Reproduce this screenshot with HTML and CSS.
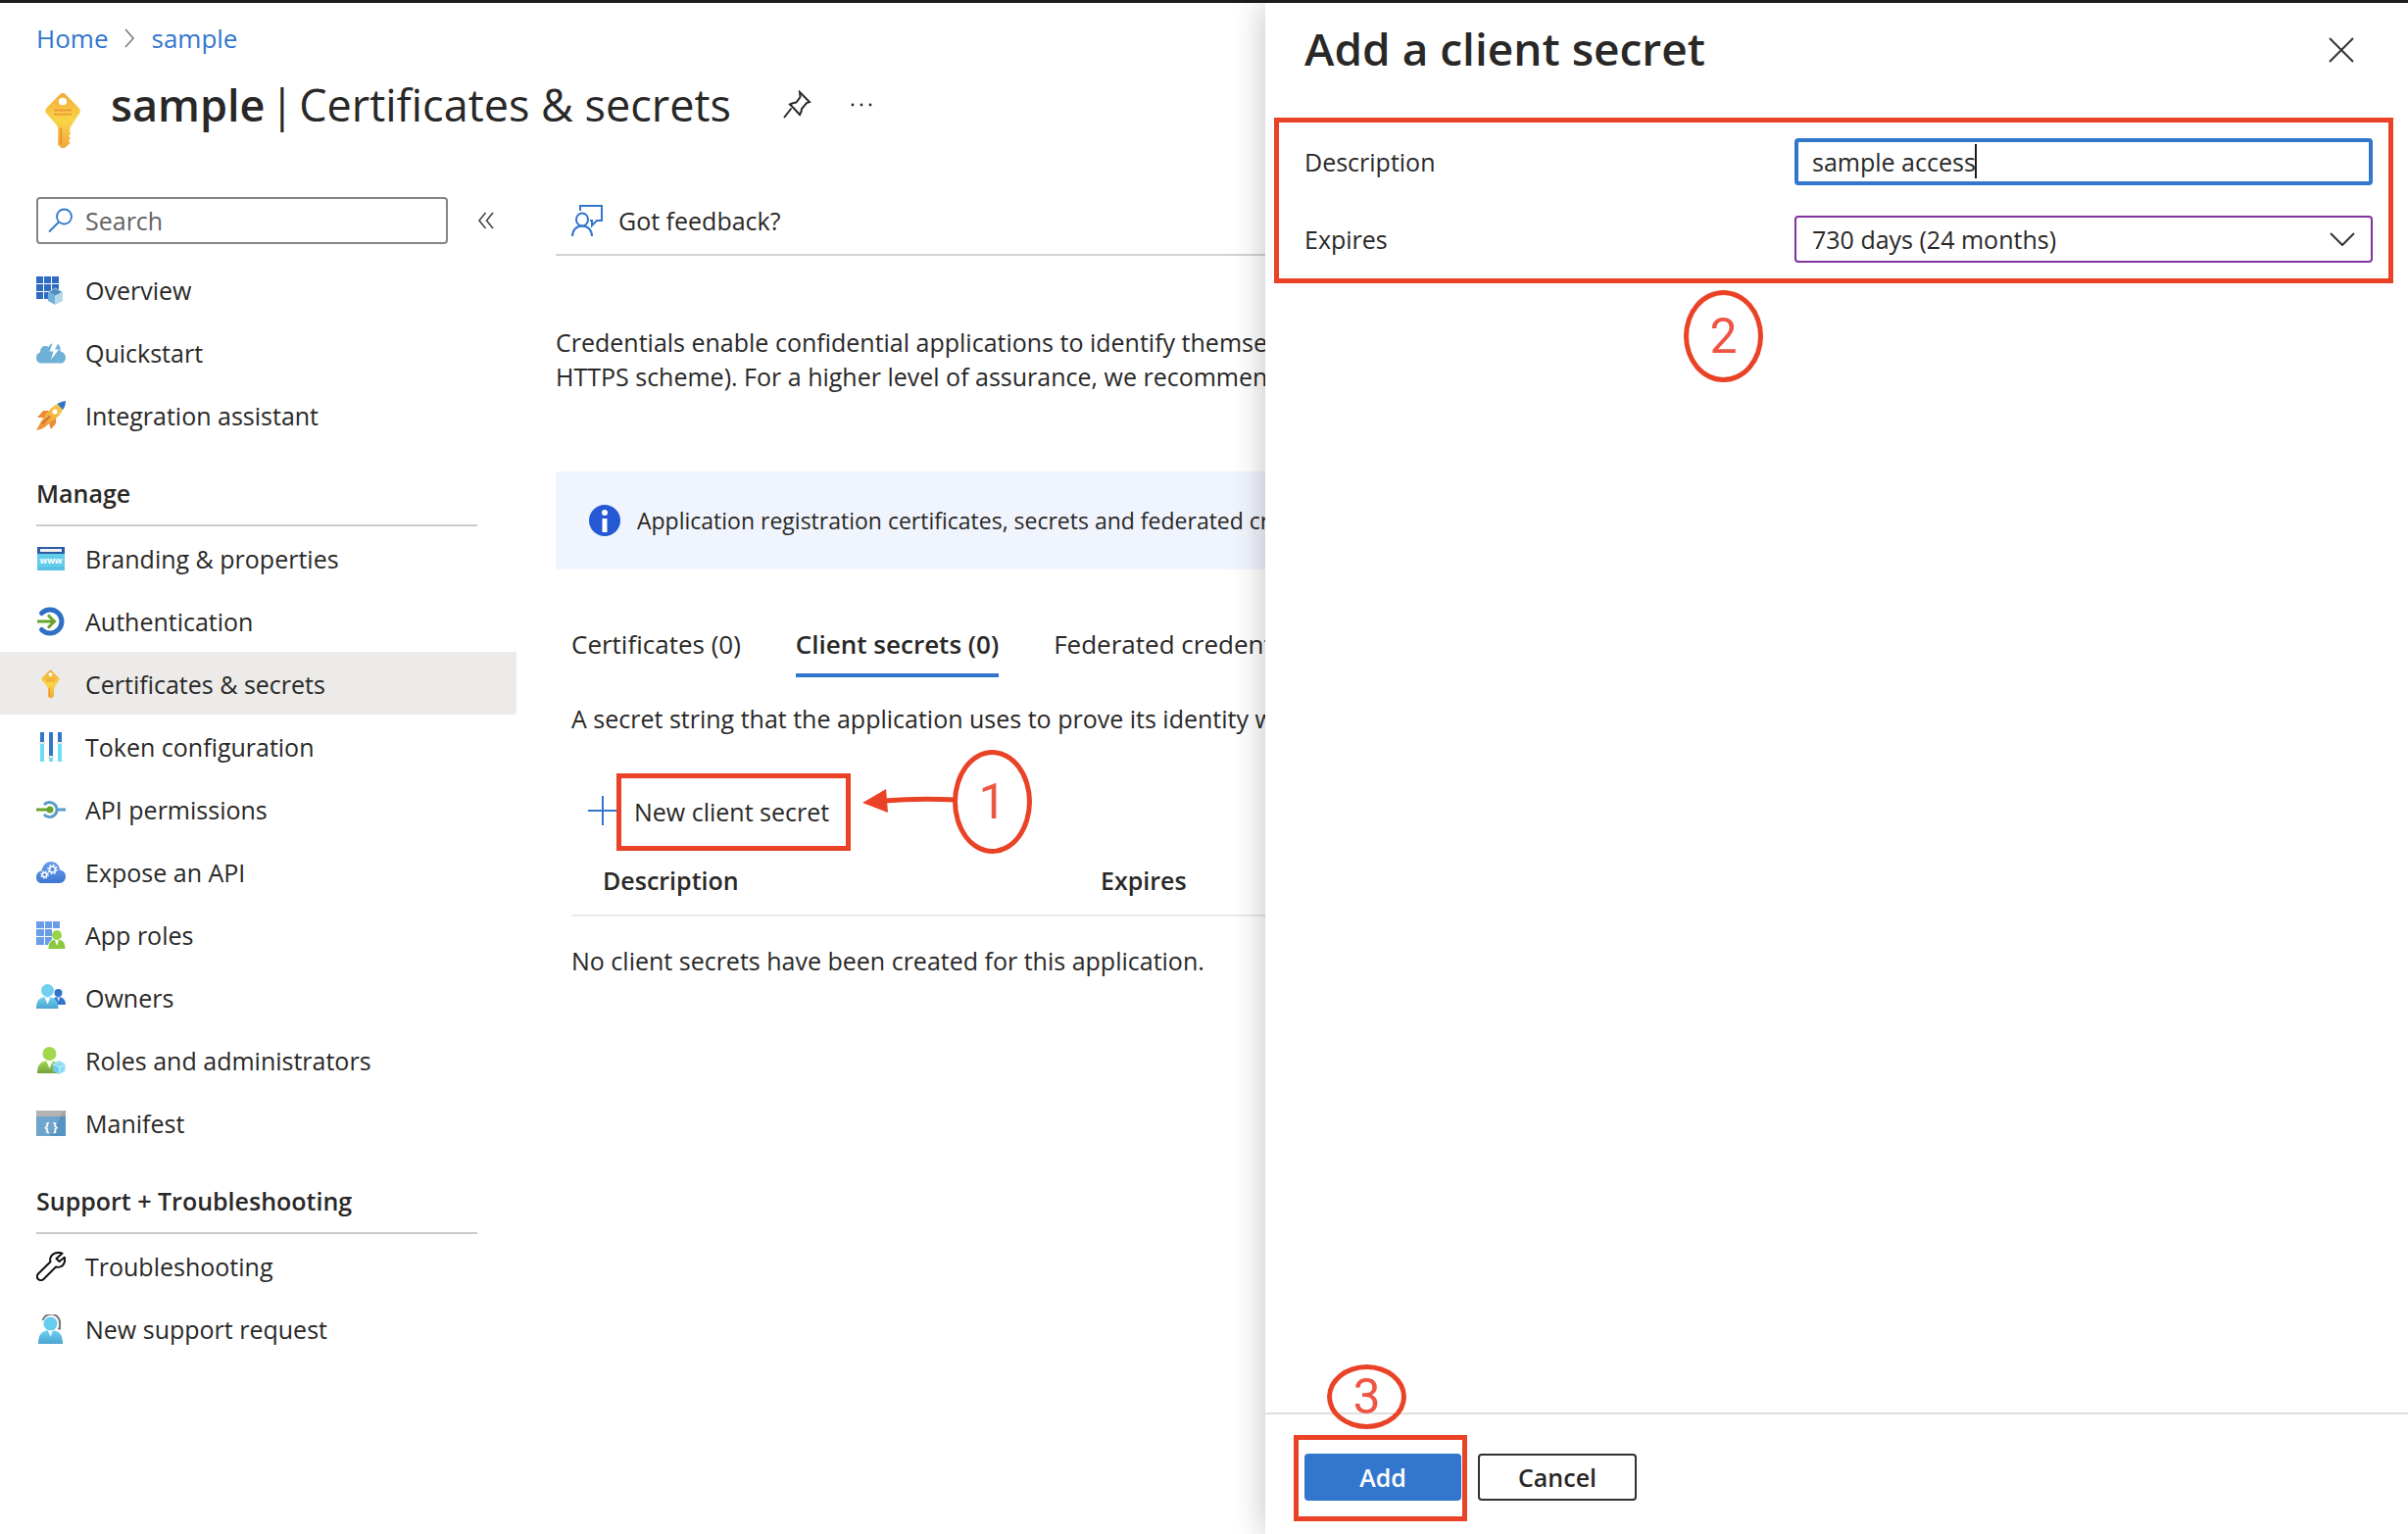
FILE: index.html
```html
<!DOCTYPE html>
<html lang="en">
  <head>
    <meta charset="UTF-8" />
    <title>sample | Certificates &amp; secrets</title>
    <link rel="stylesheet" href="styles.css">
  </head>
  <body>
    <!-- shared gradients -->
    <svg class="defs" width="0" height="0" aria-hidden="true">
      <defs>
        <linearGradient id="gGold" x1="0" y1="0" x2="0" y2="1">
          <stop offset="0" stop-color="#f2ab3c" />
          <stop offset="0.5" stop-color="#f8d547" />
          <stop offset="1" stop-color="#f1a63b" />
        </linearGradient>
        <linearGradient id="gRocket" x1="1" y1="0" x2="0" y2="1">
          <stop offset="0" stop-color="#f7d548" />
          <stop offset="1" stop-color="#ee8a33" />
        </linearGradient>
        <linearGradient id="gSky" x1="0" y1="0" x2="0" y2="1">
          <stop offset="0" stop-color="#6fd3f3" />
          <stop offset="1" stop-color="#4aa3cf" />
        </linearGradient>
        <linearGradient id="gBlue" x1="0" y1="0" x2="0" y2="1">
          <stop offset="0" stop-color="#6a9cec" />
          <stop offset="1" stop-color="#3b79d2" />
        </linearGradient>
        <linearGradient id="gGreen" x1="0" y1="0" x2="0" y2="1">
          <stop offset="0" stop-color="#a9da53" />
          <stop offset="1" stop-color="#71a03a" />
        </linearGradient>
        <symbol id="key" viewBox="0 0 20 30">
          <path fill="url(#gGold)" d="M8.6.5a2 2 0 0 1 2.8 0l7.4 7.6c.9.9.9 2 .3 3l-4.2 6.4c-.6.9-1 1.6-1 2.6l-.1 1 .6 1-1.2 1.3 1 1.2-1 1.3.9 1.4-1.1 1L11 30H9.300l-1.900-1.800V19.800c0-1-.3-1.600-.9-2.500L1 11c-.7-1-.6-2.100.2-3z" />
          <ellipse cx="10" cy="4.600" rx="2.200" ry="2" fill="#fff" />
          <path stroke="#ef9a36" stroke-width="1" d="M5.200 9.400h9.600M5.200 11.600h9.600" />
          <path stroke="#ea9136" stroke-width="1" d="M9 19v9" />
        </symbol>
      </defs>
    </svg>

    <div class="page">
      <header class="page-header">
        <nav class="breadcrumb" aria-label="Breadcrumb">
          <a href="#">Home</a>
          <svg width="12" height="20" viewBox="0 0 12 20"><path d="M2 1l8 9-8 9" fill="none" stroke="#777" stroke-width="1.500" /></svg>
          <a href="#">sample</a>
        </nav>
        <div class="title-row">
          <svg class="title-icon" width="54" height="56"><use href="#key" /></svg>
          <h1><strong>sample</strong> <span>|</span> <span>Certificates &amp; secrets</span></h1>
          <button class="icon-btn pin" aria-label="Pin">
            <svg width="30" height="30" viewBox="0 0 30 30"><path d="M18 2l10 10-3 1-5 6c0 3-1 4-2 6l-5.500-6-4.500-4.500c2-1 4-2 6.500-2l4-5.500zM9.500 18.500L2 28" fill="none" stroke="#292827" stroke-width="2" /></svg>
          </button>
          <button class="icon-btn more" aria-label="More">
            <svg width="24" height="6" viewBox="0 0 24 6"><g fill="#292827"><circle cx="3" cy="3" r="1.400" /><circle cx="12" cy="3" r="1.400" /><circle cx="21" cy="3" r="1.400" /></g></svg>
          </button>
        </div>
      </header>

      <div class="body">
        <aside class="sidebar">
          <div class="search-row">
            <label class="search">
              <svg width="26" height="26" viewBox="0 0 26 26"><g fill="none" stroke="#3276cd" stroke-width="1.800"><circle cx="16.500" cy="9" r="7.500" /><path d="M11 14.500L1 24.500" /></g></svg>
              <input type="text" placeholder="Search" aria-label="Search" />
            </label>
            <button class="icon-btn" aria-label="Collapse menu">
              <svg width="18" height="18" viewBox="0 0 18 18"><path d="M8.500 1L2 9l6.500 8M16 1L9.500 9l6.500 8" fill="none" stroke="#444" stroke-width="1.600" /></svg>
            </button>
          </div>

          <nav class="menu">
            <a href="#">
              <svg viewBox="0 0 30 30"><path fill="#2f6cc1" d="M0 1h7v7H0zM8 1h7v7H8zM16 1h7v7h-7zM0 9h7v7H0zM8 9h7v7H8zM16 9h7v7h-7zM0 17h7v7H0zM8 17h7v7H8z" /><path fill="#4f8fc0" stroke="#fff" stroke-width=".5" d="M12 17l7.500-4L27 17l-7.500 4z" /><path fill="#6fb1d8" d="M12 17l7.500 3.500V30L12 26z" /><path fill="#b5d9ec" d="M27 17l-7.500 3.500V30l7.500-4z" /></svg>
              Overview
            </a>
            <a href="#">
              <svg viewBox="0 0 30 30"><path fill="#6fb1d6" d="M5 25.500c-3 0-5-2.500-5-5.500s1.500-5 4-5.500C4 10.500 6 8 9 8c1.500 0 2.500.4 3.500 1C14 6.500 16 5 19 5c4 0 6 3 5.500 8.500 3 .5 5.500 3 5.500 6.500 0 3.500-2.500 5.500-5 5.500z" /><path fill="#fff" d="M17 4l-3.500 9.500h4L15 22l8-10.500h-4L23 4z" /></svg>
              Quickstart
            </a>
            <a href="#">
              <svg viewBox="0 0 30 30"><path fill="#ed8a35" d="M13 10H7l-6 7h7zM20 17v6l-5 6-2-6z" /><path fill="url(#gRocket)" d="M29 1c-7 1-12 4-16 9l-7 9-6 11c6-1 9-3 12-6l9-7c5-4 7-9 8-16z" /><path fill="#3272c6" d="M30 0c-4 .5-6 1.500-8.500 3l5.500 6c2-3 3-5 3-9z" /><circle cx="19" cy="11" r="2.600" fill="#fff" /><path stroke="#c8622b" stroke-width="1.500" d="M6 23.500l8-8" /></svg>
              Integration assistant
            </a>
          </nav>

          <h2>Manage</h2>
          <nav class="menu">
            <a href="#">
              <svg viewBox="0 0 30 30"><rect x="1" y="3" width="28" height="24" rx="1" fill="#65cdec" /><path fill="#2a5da5" d="M1 3h28v7H1z" /><path fill="#f2f2f2" d="M4 5h22v3H4z" /><path fill="#50b6d8" d="M1 23h28v4H1z" opacity=".5" /><text x="15" y="20" text-anchor="middle" class="svg-www">www</text></svg>
              Branding &amp; properties
            </a>
            <a href="#">
              <svg viewBox="0 0 30 30"><path d="M5.500 6.500a12 12 0 1 1 0 17" fill="none" stroke="#2f70c4" stroke-width="5" stroke-linecap="round" /><path d="M1 15h16M12 8.500l6.500 6.500-6.500 6.500" fill="none" stroke="#69a32d" stroke-width="3" /></svg>
              Authentication
            </a>
            <a href="#" class="selected">
              <svg viewBox="0 0 30 30"><use href="#key" x="5" y="0" width="19" height="30" /></svg>
              Certificates &amp; secrets
            </a>
            <a href="#">
              <svg viewBox="0 0 30 30"><path fill="#3276cd" d="M4 0h4v10H4zM13 0h4v24h-4zM22 0h4v10h-4z" /><path fill="#6fdcf5" d="M4 12h4v18H4zM13 26h4v4h-4zM22 12h4v18h-4z" /><path fill="#e5e5e5" d="M3 10h6v2H3zM12 24h6v2h-6zM21 10h6v2h-6z" /></svg>
              Token configuration
            </a>
            <a href="#">
              <svg viewBox="0 0 30 30"><path d="M8 10a7.500 7.500 0 1 1 0 10M21.500 15H30" fill="none" stroke="#5b9cc9" stroke-width="3" /><path stroke="#69a32d" stroke-width="3" d="M0 15h14" /><circle cx="14" cy="15" r="3.500" fill="#69a32d" /></svg>
              API permissions
            </a>
            <a href="#">
              <svg viewBox="0 0 30 30"><path fill="url(#gBlue)" d="M5.500 26C2 26 0 23.500 0 20c0-3.500 2-6 5.500-6.500C6.500 8 10 4 15 4c5 0 8.500 3.500 9 8.500 3.500.5 6 3 6 6.500 0 4-2.500 7-6.500 7z" /><g fill="none" stroke="#fff"><circle cx="16.500" cy="12" r="3" stroke-width="1.600" /><circle cx="16.500" cy="12" r="4.500" stroke-width="1.500" stroke-dasharray="1.800 1.700" /><circle cx="8.500" cy="17.500" r="2.200" stroke-width="1.500" /><circle cx="8.500" cy="17.500" r="3.500" stroke-width="1.500" stroke-dasharray="1.400 1.350" /></g></svg>
              Expose an API
            </a>
            <a href="#">
              <svg viewBox="0 0 30 30"><path fill="#6a9ce8" d="M0 1h8v7H0zM9 1h7v7H9zM17 1h7v7h-7zM0 9h8v7H0zM9 9h7v7H9zM0 17h8v8H0zM9 17h7v8H9z" /><path fill="#8cc83f" stroke="#fff" d="M12 29.500c0-6 2-10 8-10.500h2c6 .5 8 4.500 8 10.500z" /><circle cx="21" cy="15" r="5" fill="#98d44b" /><path fill="#fff" d="M19 20h4l-2 6z" /></svg>
              App roles
            </a>
            <a href="#">
              <svg viewBox="0 0 30 30"><circle cx="22.500" cy="10" r="4" fill="#3273c9" /><path fill="#3273c9" d="M16 22c0-5 2-8 6.500-8s7.500 3 7.500 8z" /><path fill="#cfe3f5" d="M21 14.500h3.500L22.700 19z" /><path fill="url(#gSky)" d="M0 26c0-8 3-12 11-12s11.500 4 11.500 12z" /><circle cx="11.500" cy="7.500" r="6.500" fill="#6fd0ef" /><path fill="#fff" d="M8.500 14.500h6l-3 7z" /></svg>
              Owners
            </a>
            <a href="#">
              <svg viewBox="0 0 30 30"><path fill="url(#gGreen)" d="M1 28c0-8 3-13 12-13s12 5 12 13z" /><circle cx="13.500" cy="8" r="7" fill="#a2d74e" /><path fill="#fff" d="M10 15h7l-3.500 8z" /><path fill="#8fdcf5" d="M17 18.500l6.500-3.500 6 3.500v7L23.500 29 17 25.500z" /><path fill="#6fcaea" d="M17 18.500l6.500 3.500v7L17 25.500z" /><path stroke="#d8f3fc" stroke-width=".8" fill="none" d="M17 18.500l6.500 3.500 6-3.500M23.500 22v7" /></svg>
              Roles and administrators
            </a>
            <a href="#">
              <svg viewBox="0 0 30 30"><path fill="#5593c2" d="M0 8h30v20H0z" /><path fill="#6fa5cc" d="M0 8h25L14 28H0z" /><path fill="#a3a3a3" d="M0 2h30v6H0z" /><path fill="#b4b4b4" d="M0 2h28l-4 6H0z" /><text x="15" y="23" text-anchor="middle" class="svg-braces">{ }</text></svg>
              Manifest
            </a>
          </nav>

          <h2>Support + Troubleshooting</h2>
          <nav class="menu">
            <a href="#">
              <svg viewBox="0 0 30 30"><path d="M26.500 1.700c-5-2-10.500 0-12 4.500-.5 1.300-.5 2.700 0 4L2 22.500c-1.500 1.700-1.500 4 0 5.500s4 1.500 5.500 0L20 15.500c3.500 1 7-.5 8.500-4 .8-2 .8-4 .3-5.800L23.500 10 20.500 7z" fill="none" stroke="#111" stroke-width="2" stroke-linejoin="round" /></svg>
              Troubleshooting
            </a>
            <a href="#">
              <svg viewBox="0 0 30 30"><path fill="url(#gSky)" d="M2 30c0-9 3-14 12.500-14S27 21 27 30z" /><circle cx="14.500" cy="9.500" r="7" fill="#67cdee" /><path fill="#e5f5fb" d="M11.500 16h6l-3 7z" /><path d="M6.500 6a9 9 0 0 1 17.500 4v4.500h-2" fill="none" stroke="#777" stroke-width="2" /></svg>
              New support request
            </a>
          </nav>
        </aside>

        <main class="content">
          <div class="toolbar">
            <button class="cmd">
              <svg width="32" height="32" viewBox="0 0 32 32"><g fill="none" stroke="#3276cd" stroke-width="2"><path d="M9 6V1h22v15h-5l-5 5v-5h-2" /><ellipse cx="11" cy="15" rx="6" ry="6.500" /><path d="M1 32c0-6 4-10.500 10-10.500S21 26 21 32" /></g></svg>
              Got feedback?
            </button>
          </div>

          <p class="intro">
            Credentials enable confidential applications to identify themselves<br />
            HTTPS scheme). For a higher level of assurance, we recommend using
          </p>

          <div class="info-bar">
            <svg width="32" height="32" viewBox="0 0 32 32"><circle cx="16" cy="16" r="16" fill="#2459d3" /><circle cx="16" cy="8" r="3" fill="#fff" /><path fill="#fff" d="M13.500 14h5v14h-5z" /></svg>
            <span>Application registration certificates, secrets and federated credentials</span>
          </div>

          <div class="tab-area">
            <div class="tabs" role="tablist">
              <button role="tab">Certificates (0)</button>
              <button role="tab" class="active" aria-selected="true">Client secrets (0)</button>
              <button role="tab">Federated credentials (0)</button>
            </div>
            <p class="hint">A secret string that the application uses to prove its identity when</p>

            <div class="new-secret">
              <button class="cmd">
                <svg width="32" height="32" viewBox="0 0 32 32"><path d="M1 15h30M16 0v30" stroke="#3276cd" stroke-width="2" /></svg>
                New client secret
              </button>
              <span class="mark-box"></span>
              <svg class="mark-arrow" width="96" height="30" viewBox="0 0 96 30"><path d="M22 13q35-3 74-1" fill="none" stroke="#ea4226" stroke-width="5" /><path fill="#ea4226" d="M0 15L24 1l2 24z" /></svg>
              <span class="mark-num">1</span>
            </div>

            <table class="secrets">
              <thead>
                <tr><th>Description</th><th>Expires</th></tr>
              </thead>
              <tbody>
                <tr><td colspan="2">No client secrets have been created for this application.</td></tr>
              </tbody>
            </table>
          </div>
        </main>
      </div>
    </div>

    <section class="panel" aria-label="Add a client secret">
      <div class="panel-head">
        <h2>Add a client secret</h2>
        <button class="icon-btn" aria-label="Close">
          <svg width="26" height="26" viewBox="0 0 26 26"><path d="M1 1l24 24M25 1L1 25" stroke="#333" stroke-width="2" /></svg>
        </button>
      </div>

      <form class="fields">
        <label for="desc">Description</label>
        <div class="control">
          <input id="desc" type="text" value="sample access" />
          <span class="caret"></span>
        </div>
        <label for="expires">Expires</label>
        <div class="control">
          <select id="expires">
            <option>730 days (24 months)</option>
          </select>
          <svg class="chevron" width="26" height="14" viewBox="0 0 26 14"><path d="M1 1l12 12L25 1" fill="none" stroke="#333" stroke-width="2" /></svg>
        </div>
        <span class="mark-box"></span>
        <span class="mark-num">2</span>
      </form>

      <div class="panel-foot">
        <div class="add-wrap">
          <button class="btn btn-primary">Add</button>
          <span class="mark-box"></span>
          <span class="mark-num">3</span>
        </div>
        <button class="btn">Cancel</button>
      </div>
    </section>
  </body>
</html>
```

FILE: styles.css
```css
* {
  box-sizing: border-box;
}
body {
  display: flex;
  min-height: 100vh;
  margin: 0;
  border-top: 3px solid #1b1b1b;
  overflow: hidden;
  background: #fff;
  color: #292827;
  font-family: "Open Sans", "Noto Sans", sans-serif;
  font-size: 25px;
  line-height: 36px;
}
button,
input,
select {
  font: inherit;
  color: inherit;
}
button {
  padding: 0;
  border: none;
  background: none;
  white-space: nowrap;
}
h1,
h2,
p {
  margin: 0;
}
a {
  color: #3276cd;
  text-decoration: none;
}
svg {
  display: block;
  flex: none;
}
.defs {
  position: absolute;
}
.svg-www {
  font: bold 9px "Open Sans", sans-serif;
  fill: #fff;
}
.svg-braces {
  font: bold 13px "Open Sans", sans-serif;
  fill: #fff;
}
.page {
  flex: 1;
  min-width: 0;
  overflow: hidden;
}

/* header */
.page-header {
  padding: 18px 37px 0;
}
.breadcrumb {
  display: flex;
  align-items: center;
  gap: 16px;
  font-size: 26px;
}
.title-row {
  display: flex;
  align-items: flex-start;
  margin-top: 20px;
}
.title-icon {
  margin-top: 18px;
}
h1 {
  display: flex;
  gap: 5px;
  margin-left: 22px;
  font-size: 45px;
  font-weight: 400;
  line-height: 60px;
}
h1 strong {
  font-weight: 600;
}
.icon-btn {
  display: flex;
  align-items: center;
  justify-content: center;
}
.pin,
.more {
  height: 60px;
}
.pin {
  margin-left: 52px;
}
.more {
  margin-left: 39px;
}

/* left menu */
.body {
  display: flex;
  margin-top: 50px;
}
.sidebar {
  flex: none;
  width: 527px;
}
.search-row {
  display: flex;
  gap: 30px;
  margin-bottom: 14px;
  padding-left: 37px;
}
.search {
  display: flex;
  align-items: center;
  gap: 12px;
  width: 420px;
  height: 48px;
  padding: 0 10px;
  border: 2px solid #868584;
  border-radius: 4px;
}
.search input {
  flex: 1;
  min-width: 0;
  padding: 0;
  border: none;
  outline: none;
  background: none;
}
.search input::placeholder {
  color: #646362;
}
.menu a {
  display: flex;
  align-items: center;
  gap: 20px;
  height: 64px;
  padding: 2px 0 0 37px;
  color: inherit;
}
.menu a svg {
  width: 30px;
  height: 30px;
}
.menu .selected {
  background: #ecebe9;
}
.sidebar h2 {
  margin: 0 40px 0 37px;
  padding: 30px 0 14px;
  border-bottom: 2px solid #cbcbcb;
  font-size: 25px;
  font-weight: 600;
}

/* main column */
.content {
  flex: 1;
  min-width: 0;
  margin-left: 40px;
}
.toolbar {
  padding: 0 16px 10px;
  border-bottom: 2px solid #d3d3d3;
}
.cmd {
  display: flex;
  align-items: center;
  gap: 16px;
  height: 48px;
}
.intro {
  margin-top: 71px;
  line-height: 35px;
  white-space: nowrap;
}
.info-bar {
  display: flex;
  align-items: center;
  gap: 17px;
  height: 100px;
  margin-top: 79px;
  padding-left: 34px;
  border-radius: 4px 0 0 4px;
  background: #f0f4fd;
  font-size: 23px;
  white-space: nowrap;
}
.tab-area {
  padding: 58px 0 0 16px;
}
.tabs {
  display: flex;
  gap: 56px;
  font-size: 26px;
}
.tabs button {
  padding-bottom: 12px;
  border-bottom: 4px solid transparent;
}
.tabs .active {
  border-color: #3276cd;
  font-weight: 600;
}
.hint {
  margin-top: 24px;
  white-space: nowrap;
}
.new-secret {
  position: relative;
  margin: 53px 0 10px;
  padding-left: 16px;
}
.secrets {
  width: 100%;
  border-collapse: collapse;
  table-layout: fixed;
}
.secrets th {
  height: 72px;
  padding: 0 0 0 32px;
  border-bottom: 2px solid #eaeaea;
  font-weight: 600;
  text-align: left;
}
.secrets th:first-child {
  width: 508px;
}
.secrets td {
  height: 90px;
  padding: 0;
}

/* side panel */
.panel {
  position: relative;
  display: flex;
  flex: none;
  flex-direction: column;
  width: 1166px;
  background: #fff;
  box-shadow: 0 0 32px rgba(0, 0, 0, 0.25);
}
.panel-head {
  display: flex;
  align-items: center;
  justify-content: space-between;
  padding: 16px 55px 0 40px;
}
.panel-head h2 {
  font-size: 46px;
  font-weight: 600;
  line-height: 60px;
}
.panel-head .icon-btn {
  padding-top: 4px;
}
.fields {
  position: relative;
  display: grid;
  grid-template-columns: 500px 1fr;
  align-items: center;
  row-gap: 31px;
  margin-top: 62px;
  padding: 0 36px 0 40px;
}
.control {
  position: relative;
}
.control input,
.control select {
  display: block;
  width: 100%;
  height: 48px;
  padding: 0 16px;
  border: 2px solid #8232a0;
  border-radius: 4px;
  outline: none;
  background: #fff;
  appearance: none;
}
.control input {
  padding: 0 14px;
  border: 4px solid #3276cd;
}
.caret {
  position: absolute;
  top: 6px;
  left: 184px;
  width: 2px;
  height: 35px;
  background: #1b1b1b;
}
.chevron {
  position: absolute;
  top: 17px;
  right: 18px;
  pointer-events: none;
}
.panel-foot {
  display: flex;
  gap: 17px;
  margin-top: auto;
  padding: 40px 40px 34px;
  border-top: 2px solid #dededd;
}
.btn {
  width: 162px;
  height: 48px;
  border: 2px solid #323130;
  border-radius: 4px;
  font-weight: 600;
}
.btn-primary {
  display: block;
  width: 160px;
  border-color: #3276cd;
  background: #3276cd;
  color: #fff;
}
.add-wrap {
  position: relative;
}

/* numbered step marks drawn over the page */
.mark-box,
.mark-num,
.mark-arrow {
  position: absolute;
  pointer-events: none;
}
.mark-box {
  border: 5px solid #ea4226;
}
.mark-num {
  display: flex;
  align-items: center;
  justify-content: center;
  width: 81px;
  border: 5px solid #ea4226;
  border-radius: 50%;
  color: #ee5545;
  font-family: Roboto, "Liberation Sans", sans-serif;
  font-size: 50px;
}
.new-secret .mark-box {
  top: -15px;
  left: 46px;
  width: 239px;
  height: 79px;
}
.new-secret .mark-arrow {
  top: 0;
  left: 297px;
}
.new-secret .mark-num {
  top: -39px;
  left: 389px;
  height: 106px;
}
.fields .mark-box {
  top: -21px;
  right: 15px;
  bottom: -21px;
  left: 9px;
}
.fields .mark-num {
  top: 155px;
  left: 427px;
  height: 94px;
}
.add-wrap .mark-box {
  top: -19px;
  left: -11px;
  width: 177px;
  height: 88px;
}
.add-wrap .mark-num {
  top: -91px;
  left: 23px;
  height: 66px;
}
```
